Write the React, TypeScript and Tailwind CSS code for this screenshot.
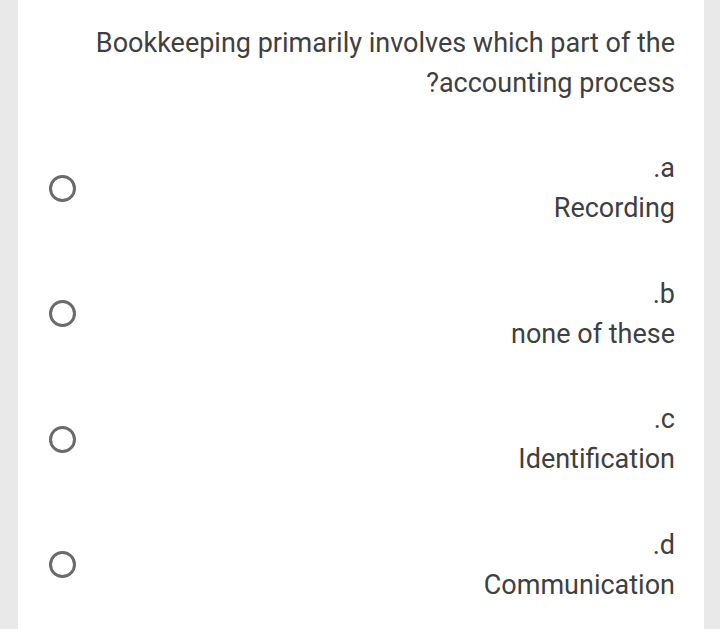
const options = [
  { key: "a", label: "Recording" },
  { key: "b", label: "none of these" },
  { key: "c", label: "Identification" },
  { key: "d", label: "Communication" },
];

export default function App() {
  return (
    <div className="min-h-[629px] w-[720px] bg-[#e9e9e9] pl-[18px] pr-[16px] font-['Roboto',sans-serif] text-[#404040]">
      <div className="min-h-[629px] bg-white pl-[31px] pr-[29px] pt-[23px]">
        <div className="text-right text-[27px] leading-[40px]">
          <div>Bookkeeping primarily involves which part of the</div>
          <div>?accounting process</div>
        </div>
        <div className="mt-[45px] flex flex-col gap-[45.5px]">
          {options.map((o) => (
            <div key={o.key} className="flex items-center justify-between">
              <span className="h-[27px] w-[27px] rounded-full border-[3px] border-[#6b6b6b]" />
              <div className="text-right text-[27px] leading-[40px]">
                <div>.{o.key}</div>
                <div>{o.label}</div>
              </div>
            </div>
          ))}
        </div>
      </div>
    </div>
  );
}
